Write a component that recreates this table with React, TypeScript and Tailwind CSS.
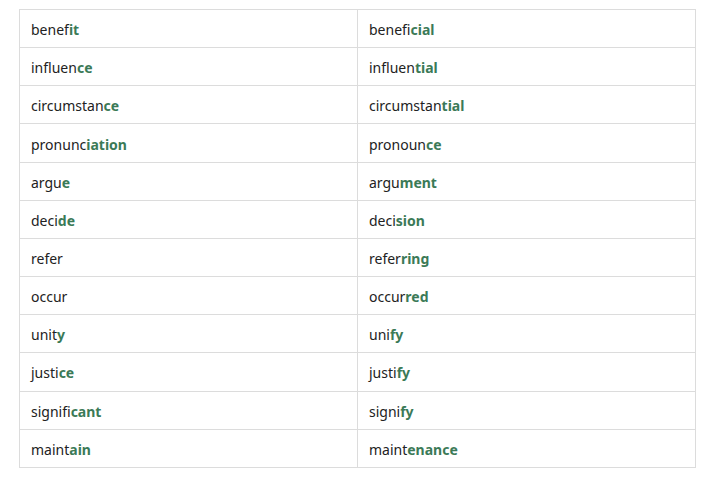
import React from "react";

const rows: [string, string, string, string][] = [
  ["benef", "it", "benefi", "cial"],
  ["influen", "ce", "influen", "tial"],
  ["circumstan", "ce", "circumstan", "tial"],
  ["pronunc", "iation", "pronoun", "ce"],
  ["argu", "e", "argu", "ment"],
  ["deci", "de", "deci", "sion"],
  ["refer", "", "refer", "ring"],
  ["occur", "", "occur", "red"],
  ["unit", "y", "uni", "fy"],
  ["justi", "ce", "justi", "fy"],
  ["signifi", "cant", "signi", "fy"],
  ["maint", "ain", "maint", "enance"],
];

export default function App() {
  return (
    <div className="bg-white w-[708px] h-[481px] pt-[9px] pl-[19px]" style={{ fontFamily: '"Noto Sans", sans-serif' }}>
      <table className="border-collapse w-[677px] table-fixed text-[14px] text-[#222]">
        <tbody>
          {rows.map((r, i) => (
            <tr key={i} className="h-[38.17px]">
              <td className="border border-[#dcdcdc] px-[11px] pt-[2px] pb-0 w-[338px]">
                {r[0]}
                <b className="font-bold text-[#3b7a57]">{r[1]}</b>
              </td>
              <td className="border border-[#dcdcdc] px-[11px] pt-[2px] pb-0">
                {r[2]}
                <b className="font-bold text-[#3b7a57]">{r[3]}</b>
              </td>
            </tr>
          ))}
        </tbody>
      </table>
    </div>
  );
}
